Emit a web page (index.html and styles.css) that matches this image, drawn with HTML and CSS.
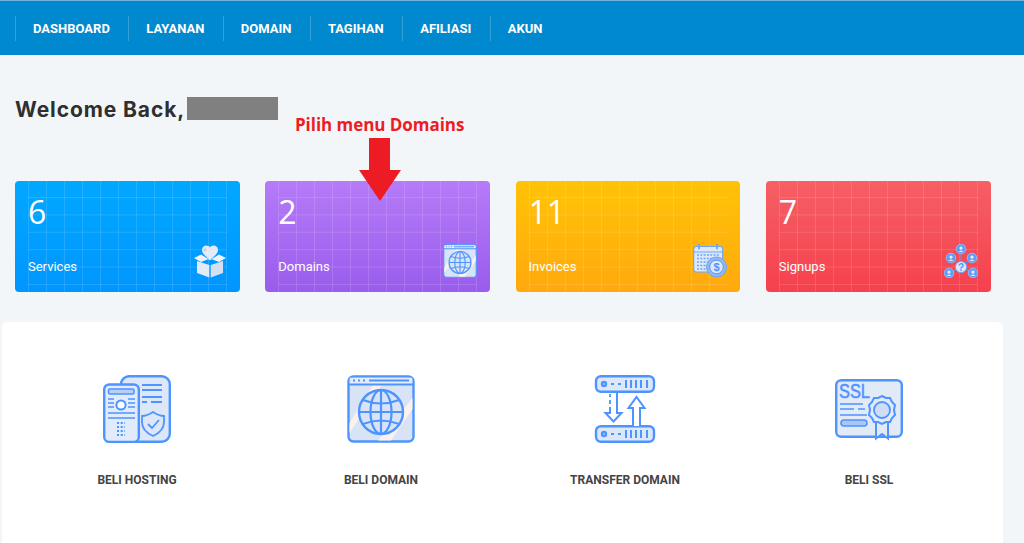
FILE: index.html
```html
<!DOCTYPE html>
<html lang="en">
<head>
    <meta charset="UTF-8">
    <meta name="viewport" content="width=device-width, initial-scale=1.0">
    <title>Dashboard</title>
    <link rel="stylesheet" href="styles.css">
</head>
<body>
    <svg class="defs" width="0" height="0">
        <symbol id="i-globe" viewBox="0 0 68 68">
            <rect x="1.5" y="1.5" width="65" height="65" rx="5" fill="#d8e4f6" stroke="#4d94ff" stroke-width="2.4"/>
            <path d="M2.5 48 L26 10 H35 L2.5 58 Z M31 65.5 L65.5 23 V34 L44 65.5 Z" fill="#fdf1ed"/>
            <rect x="2.7" y="2.7" width="62.6" height="6.5" fill="#e4ecf9"/>
            <path d="M2 9.5 H66" stroke="#4d94ff" stroke-width="2.2"/>
            <path d="M6 5.6 H8 M11 5.6 H13 M16 5.6 H18 M22 5.6 H62" stroke="#4d94ff" stroke-width="2"/>
            <circle cx="34" cy="37" r="22" fill="#d8e4f6" stroke="#4d94ff" stroke-width="2.4"/>
            <ellipse cx="34" cy="37" rx="10.5" ry="22" fill="none" stroke="#4d94ff" stroke-width="2.2"/>
            <path d="M34 15 V59 M12 37 H56 M16 25 Q34 32 52 25 M16 49 Q34 42 52 49" fill="none" stroke="#4d94ff" stroke-width="2.2"/>
        </symbol>
    </svg>

    <nav class="topnav">
        <a class="nav-item" href="#">DASHBOARD</a>
        <a class="nav-item" href="#">LAYANAN</a>
        <a class="nav-item" href="#">DOMAIN</a>
        <a class="nav-item" href="#">TAGIHAN</a>
        <a class="nav-item" href="#">AFILIASI</a>
        <a class="nav-item" href="#">AKUN</a>
    </nav>

    <main class="content">
        <h1 class="welcome">Welcome Back,<span class="redacted"></span></h1>

        <!-- tutorial annotation drawn over the page -->
        <div class="note">Pilih menu Domains</div>
        <svg class="note-arrow" width="42" height="63" viewBox="0 0 42 63">
            <path d="M10 0 H31 V32 H42 L21 63 L0 32 H10 Z" fill="#ed1c24"/>
        </svg>

        <section class="stats">
            <a class="stat stat-blue" href="#">
                <div>
                    <div class="stat-num">6</div>
                    <div class="stat-label">Services</div>
                </div>
                <svg class="stat-icon" viewBox="0 0 34 34">
                    <path d="M17 16 C11 11 9 9 9 6 C9 3 11 1.5 13.5 1.5 C15 1.5 16.3 2.2 17 3.4 C17.7 2.2 19 1.5 20.5 1.5 C23 1.5 25 3 25 6 C25 9 23 11 17 16 Z" fill="#e3ebf8"/>
                    <path d="M12 4.5 V7.5 M10.5 6 H13.5" stroke="#a9c6ee" stroke-width="1"/>
                    <path d="M1 14 L8 10.5 L17 16 L26 10.5 L33 14 L26 18 L17 14.5 L8 18 Z" fill="#eef3fb"/>
                    <path d="M4 17 L16.3 21 V33.5 L4 29 Z" fill="#e3ebf8"/>
                    <path d="M30 17 L17.7 21 V33.5 L30 29 Z" fill="#d3e0f4"/>
                </svg>
            </a>
            <a class="stat stat-purple" href="#">
                <div>
                    <div class="stat-num">2</div>
                    <div class="stat-label">Domains</div>
                </div>
                <svg class="stat-icon"><use href="#i-globe"/></svg>
            </a>
            <a class="stat stat-yellow" href="#">
                <div>
                    <div class="stat-num">11</div>
                    <div class="stat-label">Invoices</div>
                </div>
                <svg class="stat-icon" viewBox="0 0 34 34">
                    <rect x="0.7" y="2.5" width="29" height="25.5" rx="2.5" fill="#dde8f8" stroke="#6ea6f5" stroke-width="1.2"/>
                    <path d="M1 8 H29.5" stroke="#6ea6f5" stroke-width="1.2"/>
                    <path d="M6 0.5 V4.5 M24 0.5 V4.5" stroke="#6ea6f5" stroke-width="1.8" stroke-linecap="round"/>
                    <path d="M4 11 H26 M4 14.5 H26 M4 18 H26 M4 21.5 H18 M4 25 H15" stroke="#6ea6f5" stroke-width="1.7" stroke-dasharray="2 1.3"/>
                    <circle cx="23.5" cy="23" r="10" fill="#8db9f7" stroke="#6ea6f5" stroke-width="1"/>
                    <circle cx="23.5" cy="23" r="6.8" fill="#dde8f8" stroke="#5a97f0" stroke-width="1"/>
                    <text class="icon-text" x="23.5" y="27" font-size="11" fill="#4d94ff" text-anchor="middle">$</text>
                </svg>
            </a>
            <a class="stat stat-red" href="#">
                <div>
                    <div class="stat-num">7</div>
                    <div class="stat-label">Signups</div>
                </div>
                <svg class="stat-icon" viewBox="0 0 34 34">
                    <path d="M17 5 V23 M7 14 L17 23 M28 14 L17 23 M5 29 L17 23 M29 29 L17 23" stroke="#5a97f0" stroke-width="1"/>
                    <g fill="#5f9cf5" stroke="#8db9f7" stroke-width="1">
                        <circle cx="17" cy="5" r="4.8"/>
                        <circle cx="7" cy="14" r="4.8"/>
                        <circle cx="28" cy="14" r="4.8"/>
                        <circle cx="5" cy="29" r="4.8"/>
                        <circle cx="29" cy="29" r="4.8"/>
                    </g>
                    <g fill="#e3ebf8">
                        <path d="M17 2.5 a1.6 1.6 0 1 1 -.01 0 Z M14.5 8 Q17 4.8 19.5 8 Z"/>
                        <path d="M7 11.5 a1.6 1.6 0 1 1 -.01 0 Z M4.5 17 Q7 13.8 9.5 17 Z"/>
                        <path d="M28 11.5 a1.6 1.6 0 1 1 -.01 0 Z M25.5 17 Q28 13.8 30.5 17 Z"/>
                        <path d="M5 26.5 a1.6 1.6 0 1 1 -.01 0 Z M2.5 32 Q5 28.8 7.5 32 Z"/>
                        <path d="M29 26.5 a1.6 1.6 0 1 1 -.01 0 Z M26.5 32 Q29 28.8 31.5 32 Z"/>
                    </g>
                    <circle cx="17" cy="23" r="5.6" fill="#dde8f8" stroke="#6ea6f5" stroke-width="1"/>
                    <text class="icon-text" x="17" y="26.6" font-size="10" fill="#4d94ff" text-anchor="middle">?</text>
                </svg>
            </a>
        </section>

        <section class="panel">
            <a class="shop-item" href="#">
                <svg class="shop-icon" viewBox="0 0 68 68">
                    <rect x="18" y="1.2" width="48.8" height="65.6" rx="8" fill="#dce7f7" stroke="#4d94ff" stroke-width="2.4"/>
                    <path d="M39 10 H59 M39 15 H59 M39 22 H59 M39 27 H44 M48 27 H59" stroke="#4d94ff" stroke-width="1.8"/>
                    <path d="M50 37 Q56 41 61 41 V47 Q61 56 50 61 Q39 56 39 47 V41 Q44 41 50 37 Z" fill="#dce7f7" stroke="#4d94ff" stroke-width="1.8"/>
                    <path d="M45 49 L49 53 L56 45" fill="none" stroke="#4d94ff" stroke-width="1.8"/>
                    <rect x="1.2" y="9.5" width="34.6" height="57.4" rx="5" fill="#e2ebf9" stroke="#4d94ff" stroke-width="2.4"/>
                    <rect x="5.5" y="14" width="25.5" height="5" rx="1.5" fill="#b6d0f7" stroke="#4d94ff" stroke-width="1.6"/>
                    <circle cx="18" cy="30" r="4.6" fill="#fff" stroke="#4d94ff" stroke-width="2"/>
                    <path d="M5 24 H11 M5 28 H11 M5 32 H11 M25 24 H32 M25 28 H32 M25 32 H32 M5 38 H32 M5 43 H32" stroke="#4d94ff" stroke-width="1.6"/>
                    <path d="M14 48 H22 M14 52 H22 M14 56 H22 M14 60 H22" stroke="#4d94ff" stroke-width="1.8" stroke-dasharray="2 1.7"/>
                </svg>
                <span class="shop-label">BELI HOSTING</span>
            </a>
            <a class="shop-item" href="#">
                <svg class="shop-icon"><use href="#i-globe"/></svg>
                <span class="shop-label">BELI DOMAIN</span>
            </a>
            <a class="shop-item" href="#">
                <svg class="shop-icon" viewBox="0 0 68 68">
                    <g fill="#dce7f7" stroke="#4d94ff" stroke-width="2.4">
                        <rect x="5" y="1.2" width="58" height="15.6" rx="5"/>
                        <rect x="5" y="51.2" width="58" height="15.6" rx="5"/>
                        <circle cx="13" cy="9" r="2"/>
                        <circle cx="13" cy="59" r="2"/>
                    </g>
                    <path d="M20 9 H23 M27 9 H30 M35 5 V13 M40 5 V13 M45 5 V13 M50 5 V13 M56 5 V13 M20 59 H23 M27 59 H30 M35 55 V63 M40 55 V63 M45 55 V63 M50 55 V63 M56 55 V63" stroke="#4d94ff" stroke-width="2"/>
                    <path d="M19 19 V22 M19 25 V29" stroke="#4d94ff" stroke-width="1.8"/>
                    <path d="M19 32 V38 H14.5 L22.5 46.5 L30.5 38 H26 V17" fill="#fff" stroke="#4d94ff" stroke-width="2"/>
                    <path d="M42 51 V33 H37.5 L45.5 22 L53.5 33 H49 V51" fill="#fff" stroke="#4d94ff" stroke-width="2"/>
                </svg>
                <span class="shop-label">TRANSFER DOMAIN</span>
            </a>
            <a class="shop-item" href="#">
                <svg class="shop-icon" viewBox="0 0 68 68">
                    <rect x="1.2" y="5.2" width="65.6" height="56.6" rx="5" fill="#e2e9f7" stroke="#4d94ff" stroke-width="2.4"/>
                    <text class="ssl-text" x="4" y="23" font-size="20" fill="#4d94ff" stroke="#4d94ff" stroke-width="0.5" textLength="31" lengthAdjust="spacingAndGlyphs">SSL</text>
                    <path d="M5 29 H28 M5 34 H19 M23 34 H30 M5 40 H32" stroke="#4d94ff" stroke-width="1.7"/>
                    <rect x="6" y="45" width="26" height="6" rx="3" fill="#a9c6f5" stroke="#4d94ff" stroke-width="1.6"/>
                    <path d="M41 46 V63.5 L47 59 L53 63.5 V46" fill="#e2e9f7" stroke="#4d94ff" stroke-width="2"/>
                    <path d="M47 21 L51 23 L55 23 L57 27 L60 30 L59 35 L60 40 L57 43 L55 47 L51 47 L47 49 L43 47 L39 47 L37 43 L34 40 L35 35 L34 30 L37 27 L39 23 L43 23 Z" fill="#e2e9f7" stroke="#4d94ff" stroke-width="2"/>
                    <circle cx="47" cy="35" r="8" fill="#cfdef6" stroke="#4d94ff" stroke-width="1.8"/>
                </svg>
                <span class="shop-label">BELI SSL</span>
            </a>
        </section>
    </main>
</body>
</html>
```

FILE: styles.css
```css
* {
    box-sizing: border-box;
    margin: 0;
    padding: 0;
}

html, body {
    height: 100%;
    overflow: hidden;
}

body {
    font-family: Roboto, "Liberation Sans", sans-serif;
    background: #f3f6f9;
    color: #333;
}

a {
    color: inherit;
    text-decoration: none;
}

.defs {
    display: block;
    height: 0;
}

.topnav {
    display: flex;
    align-items: center;
    height: 55px;
    padding-left: 15px;
    background: #0089cf;
    border-top: 1px solid #6fb3dc;
}

.nav-item {
    padding: 1px 18.4px 0 17px;
    line-height: 24px;
    font-size: 13px;
    font-weight: 700;
    color: #fff;
    border-left: 1px solid rgba(255, 255, 255, 0.2);
}

.content {
    position: relative;
    padding-top: 42px;
}

.welcome {
    display: flex;
    gap: 2px;
    height: 84px;
    padding-left: 15px;
    font-family: Inter, "Open Sans", sans-serif;
    font-size: 21px;
    font-weight: 700;
    line-height: 26px;
    letter-spacing: 0.9px;
    color: #2f2f2f;
}

.redacted {
    width: 91px;
    height: 23px;
    background: #808080;
}

.note {
    position: absolute;
    left: 295px;
    top: 58px;
    font-family: "Open Sans", sans-serif;
    font-size: 17px;
    font-weight: 700;
    line-height: 24px;
    letter-spacing: -0.05px;
    color: #ed1c24;
    white-space: nowrap;
}

.note-arrow {
    position: absolute;
    left: 359px;
    top: 83px;
    z-index: 2;
}

.stats {
    display: flex;
    gap: 25.6px;
    padding-left: 15px;
}

.stat {
    position: relative;
    display: flex;
    justify-content: space-between;
    align-items: flex-end;
    width: 224.7px;
    height: 111px;
    padding: 0 13px 14px 13px;
    border-radius: 4px;
    color: #fff;
    overflow: hidden;
}

/* faint grid over each card */
.stat::before {
    content: "";
    position: absolute;
    top: 0;
    bottom: 0;
    left: 13px;
    right: 13px;
    background-image:
        linear-gradient(to right, rgba(255, 255, 255, 0.13) 1px, transparent 1px),
        linear-gradient(to bottom, rgba(255, 255, 255, 0.13) 1px, transparent 1px);
    background-size: 18px 17.4px;
    background-position: 0 -1.4px;
}

.stat > * {
    position: relative;
}

.stat-blue {
    background: linear-gradient(to bottom, #00a8ff, #0096ff);
}

.stat-purple {
    background: linear-gradient(to bottom, #b57bf8, #9a5cec);
}

.stat-yellow {
    background: linear-gradient(to bottom, #ffc306, #ffa90f);
}

.stat-red {
    background: linear-gradient(to bottom, #f65f65, #f5414e);
}

.stat-num {
    font-family: "Open Sans", sans-serif;
    font-size: 32px;
    font-weight: 400;
    line-height: 40px;
    margin-bottom: 26px;
}

.stat-label {
    font-size: 13px;
    line-height: 18px;
    margin-bottom: 2px;
}

.stat-icon {
    display: block;
    width: 34px;
    height: 34px;
    flex: none;
}

.icon-text {
    font-family: "Liberation Sans", sans-serif;
    font-weight: 700;
}

.ssl-text {
    font-family: "Liberation Sans", sans-serif;
}

.panel {
    display: grid;
    grid-template-columns: repeat(4, 244px);
    width: 1001px;
    height: 240px;
    margin: 30px 0 0 2px;
    padding: 53px 0 0 13px;
    background: #fff;
    border-radius: 5px 5px 0 0;
}

.shop-item {
    display: flex;
    flex-direction: column;
    align-items: center;
}

.shop-icon {
    display: block;
    width: 68px;
    height: 68px;
}

.shop-label {
    margin-top: 29px;
    font-size: 12px;
    font-weight: 700;
    line-height: 16px;
    color: #444;
}
```
